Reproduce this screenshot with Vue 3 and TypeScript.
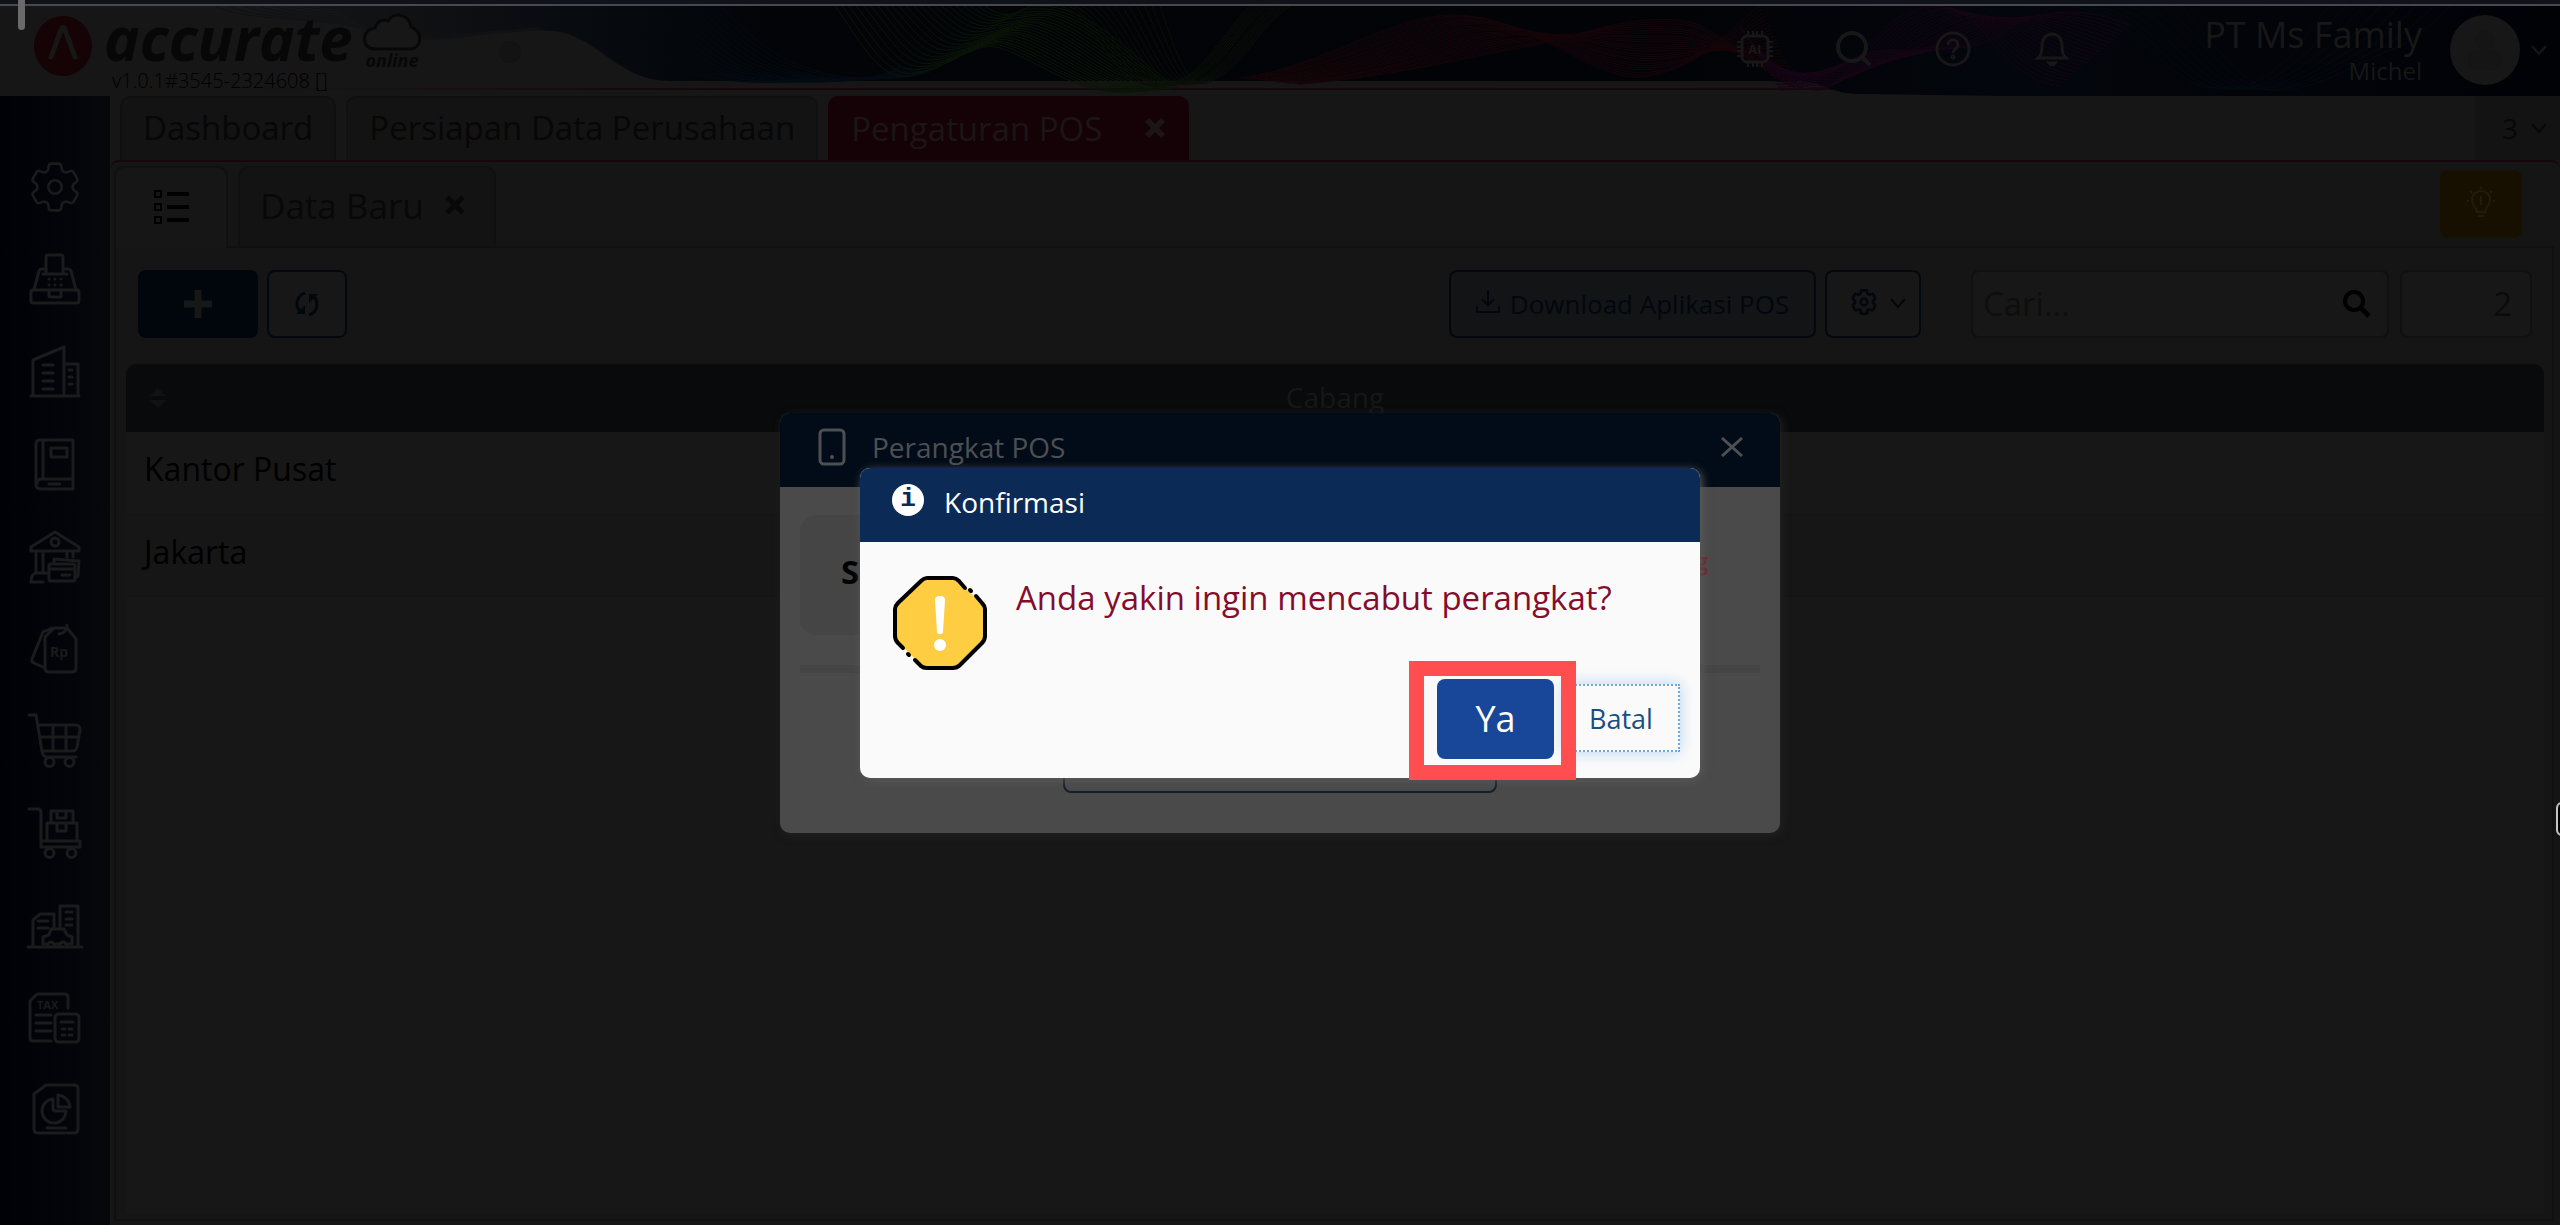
<script setup lang="ts">
import { ref } from 'vue'

type Curve = number[]
interface Ribbon { color: string; from: Curve; to: Curve; count: number }

const GEAR =
  'M9.594 3.94c.09-.542.56-.94 1.11-.94h2.593c.55 0 1.02.398 1.11.94l.213 1.281c.063.374.313.686.645.87.074.04.147.083.22.127.325.196.72.257 1.075.124l1.217-.456a1.125 1.125 0 0 1 1.37.49l1.296 2.247a1.125 1.125 0 0 1-.26 1.431l-1.003.827c-.293.241-.438.613-.43.992a7.723 7.723 0 0 1 0 .255c-.008.378.137.75.43.991l1.004.827c.424.35.534.955.26 1.43l-1.298 2.247a1.125 1.125 0 0 1-1.369.491l-1.217-.456c-.355-.133-.75-.072-1.076.124a6.47 6.47 0 0 1-.22.128c-.331.183-.581.495-.644.869l-.213 1.281c-.09.543-.56.94-1.11.94h-2.594c-.55 0-1.019-.398-1.11-.94l-.213-1.281c-.062-.374-.312-.686-.644-.87a6.52 6.52 0 0 1-.22-.127c-.325-.196-.72-.257-1.076-.124l-1.217.456a1.125 1.125 0 0 1-1.369-.49l-1.297-2.247a1.125 1.125 0 0 1 .26-1.431l1.004-.827c.292-.24.437-.613.43-.991a6.932 6.932 0 0 1 0-.255c.007-.38-.138-.751-.43-.992l-1.004-.827a1.125 1.125 0 0 1-.26-1.43l1.297-2.247a1.125 1.125 0 0 1 1.37-.491l1.216.456c.356.133.751.072 1.076-.124.072-.044.146-.086.22-.128.332-.183.582-.495.644-.869l.214-1.28Z'

const ribbons: Ribbon[] = [
  { color: '#101214', count: 9,
    from: [215, 0, 250, 18, 330, 8, 380, 28, 400, 36, 420, 34, 450, 32, 480, 29, 500, 26, 530, 24],
    to: [330, 0, 360, 2, 380, 8, 400, 16, 420, 24, 430, 26, 460, 28, 490, 26, 510, 24, 540, 22] },
  { color: '#040b12', count: 16,
    from: [600, 0, 640, 20, 650, 60, 700, 70, 740, 78, 760, 76, 800, 76, 840, 76, 880, 74, 900, 60],
    to: [720, 0, 760, 40, 780, 55, 820, 66, 840, 72, 860, 72, 880, 72, 900, 72, 920, 70, 930, 66] },
  { color: '#0a1506', count: 22,
    from: [835, 0, 860, 34, 880, 76, 910, 70, 950, 62, 975, 34, 1000, 42, 1040, 54, 1080, 94, 1140, 85],
    to: [985, 0, 1005, 14, 1015, 8, 1030, 0, 1040, 0, 1055, 0, 1065, 4, 1110, 18, 1140, 60, 1180, 82] },
  { color: '#0a1007', count: 14,
    from: [1060, 0, 1100, 10, 1110, 84, 1160, 80, 1200, 76, 1220, 30, 1250, 0, 1260, -6, 1270, -8, 1280, -8],
    to: [1160, 0, 1180, 60, 1190, 84, 1210, 76, 1240, 64, 1260, 20, 1290, 0, 1300, -6, 1310, -8, 1320, -8] },
  { color: '#150509', count: 26,
    from: [1240, 72, 1330, 60, 1400, 0, 1470, 10, 1540, 18, 1600, 80, 1650, 70, 1700, 60, 1720, 30, 1760, 0],
    to: [1300, 78, 1400, 70, 1470, 50, 1530, 40, 1580, 30, 1620, 10, 1680, 14, 1720, 18, 1760, 70, 1800, 84] },
  { color: '#150415', count: 22,
    from: [1740, 20, 1770, 70, 1790, 84, 1820, 84, 1850, 80, 1870, 10, 1930, 0, 1990, -4, 1990, 70, 2060, 80],
    to: [1780, 84, 1830, 84, 1840, 44, 1890, 44, 1940, 44, 1980, 44, 2000, 30, 2030, 0, 2090, 0, 2130, 20] },
  { color: '#040a11', count: 8,
    from: [2060, 0, 2130, 0, 2150, 60, 2200, 80, 2250, 90, 2270, 70, 2300, 40, 2310, 20, 2320, 10, 2330, 0],
    to: [2180, 0, 2210, 30, 2230, 70, 2270, 84, 2310, 88, 2350, 60, 2400, 40, 2420, 30, 2440, 10, 2450, 0] },
]

function strand(r: Ribbon, i: number): string {
  const t = i / (r.count - 1)
  const p = r.from.map((v, k) => Math.round(v + (r.to[k] - v) * t))
  return `M${p[0]} ${p[1]}C${p.slice(2).join(' ')}`
}

interface NavIcon { name: string; paths: string[]; label?: { text: string; x: number; y: number; size: number } }

const nav: NavIcon[] = [
  { name: 'Pengaturan', paths: [] },
  { name: 'Kasir', paths: [
    'M43 41H67M46 41V24q0-2 2-2H61q2 0 2 2V41', 'M46 36H42q-2 0-3 2L34 57M63 36H68q2 0 3 2L76 57',
    'M33 57H77q2 0 2 2V68q0 2-2 2H33q-2 0-2-2V59q0-2 2-2Z', 'M49 57v6q0 1 1 1H60q1 0 1-1V57',
    'M49 46h.1M55 46h.1M61 46h.1M49 52h.1M55 52h.1M61 52h.1'] },
  { name: 'Perusahaan', paths: [
    'M31 71H79M33 71V35L64 22V71M64 39H78V71', 'M43 40H53M43 48H53M43 56H53M43 64H53M69 45h3M69 52h3M69 59h3'] },
  { name: 'Buku Besar', paths: [
    'M73 72H41q-5 0-5-5V27q0-4 4-4H73ZM43 23V62M37 66q0-4 5-4H73', 'M51 31H67V40H51ZM49 67H60'] },
  { name: 'Kas & Bank', paths: [
    'M31 38L55 23L79 38V42H31Z', 'M36 42V63M43 42V63M67 42V48M73 42V48M43 73H31q0-9 6-9H48',
    'M51 55H73q2 0 2 2V70q0 2-2 2H51q-2 0-2-2V57q0-2 2-2ZM49 60H75M62 66H70M54 54V50L79 52L78 67L75 69', 'M51 33a4 4 0 1 0 8 0a4 4 0 1 0-8 0'] },
  { name: 'Penjualan', label: { text: 'Rp', x: 50, y: 56, size: 14 }, paths: [
    'M45 36L54 27H67L76 38V67q0 4-4 4H49q-4 0-4-4ZM52 27L43 31L32 58q-1 3 2 4L45 67M59 33q8-1 8-9'] },
  { name: 'Pembelian', paths: [
    'M29 22H36L42 58H73q3 0 4-4L80 37q0-5-4-5H38M40 44H79M53 32V58M66 32V58M42 58q1 6 5 6H76',
    'M45 69a4 4 0 1 0 9 0a4 4 0 1 0-9 0M65 69a4 4 0 1 0 9 0a4 4 0 1 0-9 0'] },
  { name: 'Persediaan', paths: [
    'M29 24H38q3 0 3 4V62H80V56H41M51 38V26H73V38M47 56V38H77V56M57 26V33H66V26M57 38V46H66V38',
    'M45 68a4 4 0 1 0 9 0a4 4 0 1 0-9 0M67 68a4 4 0 1 0 9 0a4 4 0 1 0-9 0'] },
  { name: 'Aset Tetap', paths: [
    'M28 70H82M33 70V43L40 37H54V50M60 50V29H78V70M38 44H48M38 51H48M66 35H72M66 42H72M66 48H72',
    'M46 67H43V60L49 58L51 52H64L67 58L72 60V67H68M56 67H59', 'M48 68a3 3 0 1 1 6 0M60 68a3 3 0 1 1 6 0'] },
  { name: 'Pajak', label: { text: 'TAX', x: 37, y: 40, size: 11 }, paths: [
    'M51 72H33q-3 0-3-3V32L37 25H64q4 0 4 3V39M36 46H51M36 54H51M36 62H51',
    'M59 45H75q4 0 4 4V69q0 4-4 4H59q-4 0-4-4V49q0-4 4-4ZM61 53H73M62 60h3M69 60h3M62 66h3M69 66h3'] },
  { name: 'Laporan', paths: [
    'M34 33L46 24H74q4 0 4 4V68q0 4-4 4H38q-4 0-4-4ZM47 67H66', 'M53 38A12 12 0 1 0 66 50H56q-3 0-3-3ZM58 34A13 13 0 0 1 70 46H58Z'] },
]

const tabs = ref(['Dashboard', 'Persiapan Data Perusahaan'])
const branches = ref(['Kantor Pusat', 'Jakarta'])
const keyword = ref('')
const total = ref('2')
</script>

<template>
  <div class="app">
    <header class="topbar">
      <svg class="topbar-art" viewBox="0 0 2560 90" preserveAspectRatio="none" aria-hidden="true">
        <defs>
          <linearGradient id="night" x1="0" x2="1">
            <stop offset="0" stop-color="#131415" /><stop offset=".12" stop-color="#070a0f" />
            <stop offset=".2" stop-color="#020407" /><stop offset=".6" stop-color="#020306" />
            <stop offset=".75" stop-color="#03060c" /><stop offset="1" stop-color="#010206" />
          </linearGradient>
          <linearGradient id="rule" x1="0" x2="1">
            <stop offset="0" stop-color="#161616" /><stop offset=".3" stop-color="#17060b" /><stop offset="1" stop-color="#17060b" />
          </linearGradient>
        </defs>
        <rect x="240" y="82" width="1640" height="2" fill="url(#rule)" />
        <path fill="url(#night)" d="M330 0C380 34 400 34 450 31C500 26 530 22 560 26C600 34 620 75 670 75H1800C1830 78 1830 88 1860 88L2000 90H2560V0Z" />
        <g v-for="(r, k) in ribbons" :key="k" fill="none" :stroke="r.color">
          <path v-for="i in r.count" :key="i" :d="strand(r, i - 1)" />
        </g>
      </svg>
      <div class="brand">
        <svg class="brand-mark" viewBox="0 0 58 60" aria-hidden="true">
          <ellipse cx="29" cy="30" rx="29" ry="30" fill="#150306" />
          <path d="M17 41L27 14q2-5 4 0L41 41" fill="none" stroke="#171717" stroke-width="5" stroke-linecap="round" />
        </svg>
        <div class="brand-text">
          <span class="brand-name">accurate</span>
          <span class="brand-version">v1.0.1#3545-2324608 []</span>
        </div>
        <div class="brand-cloud">
          <svg viewBox="0 0 58 38" aria-hidden="true">
            <path d="M12 36C-2 36-2 16 12 15C14 8 20 6 25 8C30-1 46 0 48 14C60 18 60 36 46 36Z" fill="#171717" stroke="#080808" stroke-width="3" />
          </svg>
          <span>online</span>
        </div>
        <i class="brand-dot"></i>
      </div>
      <div class="top-actions">
        <button aria-label="AI">
          <svg viewBox="0 0 36 36"><rect x="5" y="5" width="26" height="26" rx="5" /><path d="M11 0v5M16 0v5M20 0v5M25 0v5M11 31v5M16 31v5M20 31v5M25 31v5M0 11h5M0 16h5M0 20h5M0 25h5M31 11h5M31 16h5M31 20h5M31 25h5" stroke-width="2" /><text x="11" y="23" class="ai-text">AI</text></svg>
        </button>
        <button aria-label="Cari">
          <svg viewBox="0 0 36 36"><circle cx="16" cy="16" r="14" stroke-width="4" /><path d="M26 26l8 8" stroke-width="4" /></svg>
        </button>
        <button aria-label="Bantuan">
          <svg viewBox="0 0 36 36"><circle cx="18" cy="18" r="16" stroke-width="3" /><path d="M13 14c0-7 10-7 10 0c0 4-5 4-5 8" stroke-width="3" /><circle cx="18" cy="26" r="1" /></svg>
        </button>
        <button aria-label="Notifikasi">
          <svg viewBox="0 0 36 36"><path d="M4 27h28c-4-3-4-8-4-12c0-7-4-12-10-12S8 8 8 15c0 4 0 9-4 12Z" stroke-width="3" /><path d="M15 32q3 4 6 0Z" /></svg>
        </button>
      </div>
      <div class="account">
        <strong>PT Ms Family</strong>
        <span>Michel</span>
      </div>
      <svg class="avatar" viewBox="0 0 70 70" aria-hidden="true"><circle cx="35" cy="35" r="35" fill="#171717" /><circle cx="35" cy="25" r="10" fill="#151515" /><rect x="18" y="35" width="34" height="20" rx="9" fill="#151515" /></svg>
      <svg class="chev" viewBox="0 0 18 12"><path d="M2 2l7 8l7-8" /></svg>
    </header>

    <div class="body">
      <nav class="sidebar" aria-label="Modul">
        <a v-for="item in nav" :key="item.name" href="#" :aria-label="item.name">
          <svg viewBox="0 0 110 92">
            <g v-if="!item.paths.length" transform="translate(55 46) scale(2.6) translate(-12 -12)" stroke-width="1">
              <path :d="GEAR" /><circle cx="12" cy="12" r="2.6" />
            </g>
            <path v-for="d in item.paths" :key="d" :d="d" />
            <text v-if="item.label" :x="item.label.x" :y="item.label.y" :font-size="item.label.size">{{ item.label.text }}</text>
          </svg>
        </a>
      </nav>

      <main class="main">
        <div class="tabs">
          <button v-for="t in tabs" :key="t" class="tab">{{ t }}</button>
          <button class="tab active">Pengaturan POS
            <svg viewBox="0 0 22 22"><path d="M3 3l16 16M19 3L3 19" /></svg>
          </button>
          <button class="tab-count">3 <svg class="chev" viewBox="0 0 18 12"><path d="M2 2l7 8l7-8" /></svg></button>
        </div>

        <section class="workspace">
          <div class="subtabs">
            <button class="subtab list" aria-label="Daftar">
              <svg viewBox="0 0 36 36"><path d="M2 2h6v6H2zM2 15h6v6H2zM2 28h6v6H2z" stroke-width="2" /><path d="M14 5h22M14 18h22M14 31h22" stroke-width="4" /></svg>
            </button>
            <button class="subtab">Data Baru
              <svg viewBox="0 0 22 22"><path d="M3 3l16 16M19 3L3 19" /></svg>
            </button>
            <button class="hint" aria-label="Petunjuk">
              <svg viewBox="0 0 30 34"><path d="M11 25C11 20 6 19 6 13C6 1 24 1 24 13C24 19 19 20 19 25Z" stroke-width="2" /><path d="M15 9v9M12 29h6M15 0v2M4 4l2 2M26 4l-2 2M1 14h2M27 14h2" stroke-width="2" /></svg>
            </button>
          </div>

          <div class="panel">
            <div class="toolbar">
              <button class="btn primary" aria-label="Tambah"><svg viewBox="0 0 28 28"><path d="M14 0v28M0 14h28" /></svg></button>
              <button class="btn square" aria-label="Muat ulang">
                <svg viewBox="0 0 24 24"><path d="M10 1A11 11 0 0 0 6 20M14 23A11 11 0 0 0 18 4" stroke-width="3" /><path d="M1 22h9v-9ZM23 2h-9v9Z" class="solid" /></svg>
              </button>
              <button class="btn download">
                <svg viewBox="0 0 24 24"><path d="M12 0v15M6 9l6 6l6-6M1 16v6h22v-6" stroke-width="2" /></svg>
                Download Aplikasi POS
              </button>
              <button class="btn options" aria-label="Opsi">
                <svg viewBox="2 2 20 20"><path :d="GEAR" stroke-width="2" /><circle cx="12" cy="12" r="2.6" stroke-width="2" /></svg>
                <svg class="chev" viewBox="0 0 18 12"><path d="M2 2l7 8l7-8" /></svg>
              </button>
              <label class="field search">
                <input v-model="keyword" type="text" placeholder="Cari..." aria-label="Cari data" />
                <svg viewBox="0 0 28 28"><circle cx="11" cy="11" r="9" stroke-width="4" /><path d="M18 18l8 8" stroke-width="5" /></svg>
              </label>
              <label class="field total"><input v-model="total" type="text" aria-label="Jumlah data" /></label>
            </div>
            <div class="grid">
              <table>
                <thead>
                  <tr><th><svg viewBox="0 0 16 20" aria-hidden="true"><path d="M8 0l8 8H0ZM8 20l8-8H0Z" /></svg>Cabang</th></tr>
                </thead>
                <tbody>
                  <tr v-for="b in branches" :key="b"><td>{{ b }}</td></tr>
                </tbody>
              </table>
            </div>
          </div>
        </section>
      </main>
    </div>

    <i class="top-handle"></i>
    <i class="side-handle"></i>

    <div class="overlay">
      <section class="dialog device" role="dialog" aria-label="Perangkat POS">
        <header>
          <svg class="phone" viewBox="0 0 28 38"><rect x="2" y="2" width="24" height="34" rx="4" stroke-width="3" /><circle cx="14" cy="29" r="1" stroke-width="2" /></svg>
          Perangkat POS
          <button aria-label="Tutup"><svg viewBox="0 0 22 20"><path d="M1 1l20 18M21 1L1 19" /></svg></button>
        </header>
        <div class="device-body">
          <div class="device-card"><b>S</b><em>g</em></div>
          <hr />
          <button class="device-action" aria-label="Perangkat"></button>
        </div>
      </section>
    </div>

    <div class="overlay">
      <section class="dialog confirm" role="alertdialog" aria-label="Konfirmasi">
        <header>
          <span class="info">i</span>
          Konfirmasi
        </header>
        <div class="confirm-body">
          <svg class="warn" viewBox="0 0 94 94" aria-hidden="true">
            <path d="M31 2H63L92 31V63L63 92H31L2 63V31Z" fill="#ffcd42" />
            <path d="M72 12L66 5Q63 2 60 2H34Q31 2 28 5L5 27Q2 30 2 33V60Q2 64 5 67L10 72M22 84L28 90Q30 92 34 92H60Q64 92 67 89L89 67Q92 64 92 60V33Q92 30 89 27L83 20M77 14L78 15M15 78L16 79" fill="none" stroke="#000" stroke-width="4" stroke-linecap="round" />
            <path d="M42 24Q42 20 47 20T52 24L50 56Q50 58 47 58T44 56Z" fill="#fff" /><circle cx="47" cy="69" r="6" fill="#fff" />
          </svg>
          <p>Anda yakin ingin mencabut perangkat?</p>
        </div>
        <footer>
          <button class="no">Batal</button>
          <div class="spot"><button class="yes">Ya</button></div>
        </footer>
      </section>
    </div>
  </div>
</template>

<style>
body { background: #161616; }
</style>

<style scoped>
* { box-sizing: border-box; }
.app { position: relative; min-height: 100vh; display: flex; flex-direction: column; overflow: hidden; font-family: "Open Sans", "Noto Sans", sans-serif; background: #161616; color: #000; }
button { font: inherit; color: inherit; background: none; border: 0; padding: 0; margin: 0; }
svg { display: block; flex: none; fill: none; stroke: currentColor; }
a { color: inherit; }

.topbar { position: relative; height: 96px; flex: none; border-top: 4px solid #0f1218; box-shadow: inset 0 2px #48484e; display: flex; align-items: center; padding-right: 12px; color: #171717; }
.topbar-art { position: absolute; top: 2px; left: 0; width: 100%; height: 90px; stroke: none; }
.topbar > *:not(.topbar-art) { position: relative; }
.brand { display: flex; align-items: flex-start; flex: 1; height: 92px; color: #070707; }
.brand-mark { width: 58px; height: 60px; margin: 12px 12px 0 34px; stroke: none; }
.brand-text { display: flex; flex-direction: column; width: 256px; padding-top: 2px; }
.brand-name { font: italic 700 60px/64px "Open Sans", sans-serif; }
.brand-version { font-size: 20px; line-height: 22px; font-weight: 300; padding-left: 8px; color: #000; white-space: nowrap; }
.brand-cloud { display: flex; flex-direction: column; align-items: center; margin: 9px 78px 0 3px; font: italic 700 18px/18px "Open Sans", sans-serif; }
.brand-cloud svg { width: 58px; height: 38px; }
.brand-dot { width: 22px; height: 22px; margin-top: 37px; border-radius: 50%; background: #131313; }
.top-actions { display: flex; gap: 63px; margin-right: 134px; padding-bottom: 2px; }
.top-actions svg { width: 36px; height: 36px; stroke-width: 3; }
.ai-text { font: 700 13px "Open Sans", sans-serif; fill: currentColor; stroke: none; }
.account { display: flex; flex-direction: column; align-items: flex-end; margin-right: 28px; padding-bottom: 2px; }
.account strong { font-size: 36px; line-height: 44px; font-weight: 400; }
.account span { font-size: 24px; line-height: 28px; }
.avatar { width: 70px; height: 70px; margin-right: 10px; stroke: none; }
.chev { width: 18px; height: 12px; stroke-width: 2; }

.body { flex: 1; display: flex; }
.sidebar { width: 110px; flex: none; padding-top: 45px; background: linear-gradient(90deg, #000106, #05070b); color: #1a1b1c; }
.sidebar a { display: block; }
.sidebar svg { width: 110px; height: 92px; stroke-width: 3; stroke-linecap: round; stroke-linejoin: round; }
.sidebar g { stroke-width: 1; }
.sidebar text { font-family: "Open Sans", sans-serif; font-weight: 700; fill: currentColor; stroke: none; }

.main { flex: 1; min-width: 0; display: flex; flex-direction: column; padding-left: 1px; }
.tabs { display: flex; gap: 10px; height: 64px; padding-left: 9px; color: #070707; }
.tab { display: flex; align-items: center; padding: 0 21px 4px; font-size: 33px; border: 2px solid #101010; border-bottom: 0; border-radius: 10px 10px 0 0; background: #131313; white-space: nowrap; }
.tab svg { width: 22px; height: 22px; stroke-width: 6; }
.tab.active { gap: 42px; background: #150207; border-color: #150207; color: #1b1518; padding-bottom: 2px; }
.tab-count { margin-left: auto; width: 85px; display: flex; align-items: center; justify-content: flex-end; gap: 12px; padding-right: 12px; background: #131313; font-size: 28px; }
.workspace { flex: 1; display: flex; flex-direction: column; border-top: 2px solid #17060b; border-radius: 8px 8px 0 0; padding: 4px 6px 4px 3px; background: #151515; }
.subtabs { display: flex; align-items: flex-end; gap: 10px; height: 80px; position: relative; z-index: 1; }
.subtab { display: flex; align-items: center; gap: 20px; height: 80px; padding: 0 28px 4px 20px; font-size: 35px; color: #080808; background: #131313; border: 2px solid #101010; border-bottom: 0; border-radius: 10px 10px 0 0; }
.subtab:not(.list) svg { width: 22px; height: 22px; stroke-width: 5; }
.subtab.list { width: 114px; height: 82px; margin-bottom: -2px; padding: 0 0 2px; justify-content: center; background: #161616; color: #000; }
.subtab.list svg { width: 36px; height: 36px; }
.hint { width: 82px; height: 68px; margin: 0 32px 8px auto; border-radius: 8px; background: #171000; color: #231c0c; display: flex; align-items: center; justify-content: center; }
.hint svg { width: 30px; height: 34px; }
.panel { flex: 1; display: flex; flex-direction: column; border: 2px solid #101010; padding: 22px 8px 6px 10px; }
.toolbar { display: flex; height: 68px; margin: 0 12px 26px; }
.btn { display: flex; align-items: center; justify-content: center; border: 2px solid #02080e; border-radius: 8px; background: #171717; color: #02070e; }
.primary { width: 120px; border-color: #01060d; background: #01060d; color: #171717; }
.primary svg { width: 28px; height: 28px; stroke-width: 7; }
.square { width: 80px; margin-left: 9px; }
.square svg { width: 24px; height: 24px; }
.solid { fill: currentColor; stroke: none; }
.download { margin-left: auto; width: 367px; gap: 10px; font-size: 26px; background: #131416; white-space: nowrap; }
.download svg { width: 24px; height: 24px; margin-bottom: 4px; }
.options { width: 96px; margin: 0 50px 0 9px; padding-left: 12px; gap: 12px; }
.options svg { width: 26px; height: 26px; margin-bottom: 4px; }
.options .chev { width: 18px; height: 12px; margin-bottom: 2px; }
.field { display: flex; align-items: center; border: 2px solid #101010; border-radius: 8px; background: #171717; }
.field input { flex: 1; min-width: 0; height: 60px; border: 0; padding: 0 0 2px; outline: 0; background: none; font: inherit; font-size: 33px; color: #0b0b0b; }
.field input::placeholder { color: #0e0e0e; opacity: 1; }
.search { width: 418px; padding: 0 16px 0 10px; margin-right: 11px; }
.search svg { width: 28px; height: 28px; }
.total { width: 132px; padding-right: 18px; }
.total input { text-align: right; }
.grid { flex: 1; background: #171717; border-radius: 10px 10px 0 0; overflow: hidden; }
table { width: 100%; border-collapse: collapse; }
th { position: relative; height: 68px; padding: 0 0 2px; background: #080a0c; color: #171717; font-size: 28px; font-weight: 400; text-align: center; }
th svg { position: absolute; left: 24px; top: 24px; width: 16px; height: 20px; fill: #121212; stroke: none; }
td { height: 82px; padding: 0 0 8px 18px; font-size: 32px; border-bottom: 1px solid #141414; }
tbody tr:nth-child(even) { background: #161616; }

.top-handle { position: absolute; left: 18px; top: 0; width: 7px; height: 30px; border-radius: 0 0 4px 4px; background: #6a6a6a; }
.side-handle { position: absolute; right: -12px; top: 802px; width: 16px; height: 34px; border: 2px solid #c4c4c4; border-radius: 6px; background: #000; }

.overlay { position: absolute; inset: 0; display: flex; align-items: center; justify-content: center; padding-top: 21px; }
.dialog { border-radius: 10px; overflow: hidden; }
.dialog header { flex: none; height: 74px; display: flex; align-items: center; font-size: 28px; }
.device { width: 1000px; height: 420px; background: #4a4a4a; box-shadow: 2px 2px 8px #222; }
.device header { background: #020c18; color: #4d4f52; padding: 0 37px 6px 38px; }
.phone { width: 28px; height: 38px; margin-right: 26px; }
.device header button { margin-left: auto; }
.device header button svg { width: 22px; height: 20px; stroke-width: 3; }
.device-body { padding: 28px 20px 0; display: flex; flex-direction: column; }
.device-card { height: 120px; border-radius: 16px; background: linear-gradient(90deg, #454545, #4a4a4a); display: flex; align-items: center; justify-content: space-between; padding: 0 52px 8px 41px; }
.device-card b { font-size: 33px; }
.device-card em { margin-bottom: 22px; font-style: normal; font-weight: 700; font-size: 24px; color: #6b2225; }
hr { width: 100%; height: 8px; margin: 30px 0 52px; border: 0; background: #454545; }
.device-action { width: 434px; height: 68px; align-self: center; border: 2px solid #12202e; border-radius: 8px; }

.confirm { width: 840px; height: 310px; display: flex; flex-direction: column; background: #fafafa; box-shadow: 2px 2px 10px #5a5a5a; overflow: visible; }
.confirm header { background: #0b2a55; color: #fff; padding: 0 32px 6px; border-radius: 10px 10px 0 0; }
.info { width: 32px; height: 32px; margin: 0 20px 4px 0; border-radius: 50%; background: #fff; color: #0b2a55; font: 700 26px/30px "Liberation Mono", monospace; text-align: center; }
.confirm-body { display: flex; padding: 34px 32px 0 33px; }
.warn { width: 94px; height: 94px; margin-right: 29px; stroke: none; }
.confirm-body p { margin: 0; font-size: 33px; line-height: 44px; color: #850c2b; }
.confirm footer { flex: 1; display: flex; flex-direction: row-reverse; align-items: flex-start; padding-right: 20px; }
.no { width: 116px; height: 68px; margin: 14px 0 0 -12px; border: 2px dotted #6fa8d6; color: #174f84; font-size: 27px; background: #fafafa; box-shadow: 0 0 14px #b5d6f2; padding-right: 2px; }
.spot { position: relative; width: 167px; height: 119px; margin-top: -9px; border: 15px solid #ff4d50; display: flex; align-items: center; justify-content: center; padding: 0 0 4px 6px; }
.yes { width: 117px; height: 80px; border-radius: 8px; background: #18479a; color: #fff; font-size: 36px; }
</style>
